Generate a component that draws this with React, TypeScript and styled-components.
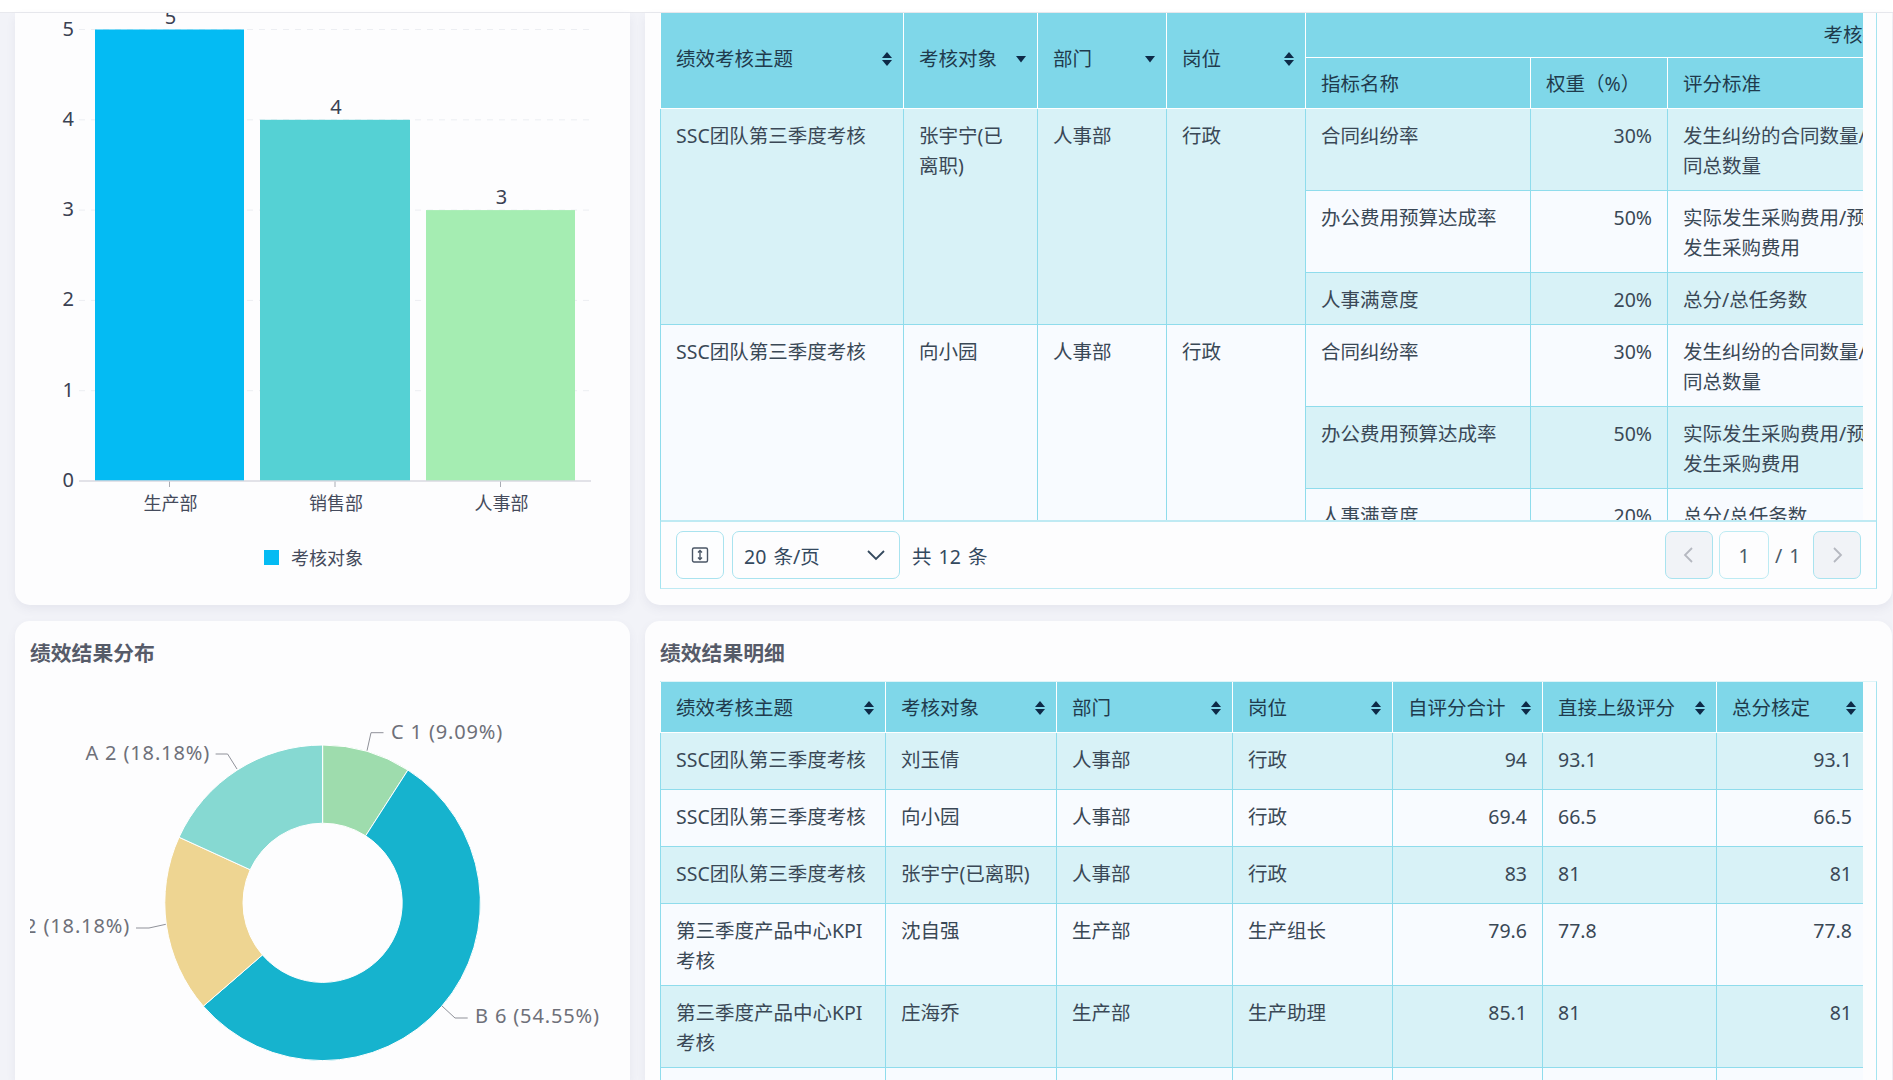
import React from "react";
import styled, { createGlobalStyle } from "styled-components";

const FONT = `"Noto Sans", "Noto Sans CJK SC", sans-serif`;

const Global = createGlobalStyle`
  html, body { margin: 0; padding: 0; height: 1080px; overflow: hidden; background: #f2f3f8; }
  body { font-family: ${FONT}; font-size: 19.5px; color: #33424f; }
  * { box-sizing: border-box; }
`;

const Page = styled.div`
  width: 1893px;
  height: 1080px;
  overflow: hidden;
  display: flex;
  flex-direction: column;
`;
const TopBar = styled.div`
  flex: none;
  height: 13px;
  background: #fff;
  border-bottom: 1px solid #e8e9ee;
`;
const Grid = styled.div`
  flex: 1;
  min-height: 0;
  display: grid;
  grid-template-columns: 615px 1247px;
  grid-template-rows: 592px 1fr;
  column-gap: 15px;
  row-gap: 16px;
  padding-left: 15px;
`;
const Card = styled.section<{ $cut?: boolean }>`
  background: #fdfdfe;
  border-radius: ${(p) => (p.$cut ? "0 0 15px 15px" : "15px 15px 0 0")};
  box-shadow: 0 4px 10px rgba(90, 95, 130, 0.08);
  padding: 0 15px ${(p) => (p.$cut ? "16px" : "0")};
  min-height: 0;
  overflow: hidden;
`;
const Title = styled.h2`
  margin: 0;
  height: 60px;
  padding-top: 15px;
  font-size: 20.8px;
  line-height: 34px;
  font-weight: 700;
  color: #565b69;
`;
const ChartSvg = styled.svg`
  display: block;
`;
const AxisText = styled.text<{ $num?: boolean }>`
  font-family: ${FONT};
  font-size: ${(p) => (p.$num ? "20px" : "18px")};
  fill: ${(p) => (p.$num ? "#3a4152" : "#454b5c")};
`;
const PieText = styled.text`
  font-family: ${FONT};
  font-size: 20px;
  letter-spacing: 0.85px;
  fill: #6e7079;
`;
const TableFrame = styled.div<{ $open?: boolean }>`
  display: flex;
  flex-direction: column;
  height: ${(p) => (p.$open ? "420px" : "576px")};
  border-left: 1px solid #a5e4f0;
  border-right: 1px solid #a5e4f0;
  border-top: ${(p) => (p.$open ? "1px solid #dff4f8" : "none")};
  border-bottom: ${(p) => (p.$open ? "none" : "1px solid #bfeaf3")};
`;
const Scroller = styled.div`
  flex: 1;
  min-height: 0;
  width: 1203px;
  margin-left: -1px;
  overflow: hidden;
`;
const Table = styled.table<{ $w: number }>`
  width: ${(p) => p.$w}px;
  table-layout: fixed;
  border-collapse: collapse;
  line-height: 30px;
  font-size: 19.5px;
  tbody tr:nth-child(odd) td { background: #d8f2f7; }
  tbody tr:nth-child(even) td { background: #f8fbff; }
`;
const Th = styled.th<{ $center?: boolean; $pt?: number; $pb?: number }>`
  background: #7fd7e9;
  border: 1px solid #fff;
  border-top: none;
  font-weight: 400;
  color: #1f3b4d;
  padding: ${(p) => p.$pt ?? 0}px 10px ${(p) => p.$pb ?? 0}px 15px;
  text-align: ${(p) => (p.$center ? "center" : "left")};
  white-space: nowrap;
`;
const HeadRow = styled.tr<{ $h: number }>`
  height: ${(p) => p.$h}px;
`;
const HeadInner = styled.div`
  display: flex;
  align-items: center;
  justify-content: space-between;
`;
const Td = styled.td<{ $right?: boolean }>`
  border: 1px solid #8fdcec;
  padding: 12px 15px 9px;
  vertical-align: top;
  color: #3a4856;
  text-align: ${(p) => (p.$right ? "right" : "left")};
  word-break: break-all;
`;
const BodyRow = styled.tr<{ $h?: number }>`
  height: ${(p) => (p.$h ? `${p.$h}px` : "auto")};
`;
const Pager = styled.div`
  flex: none;
  height: 68px;
  border-top: 2px solid #bfeaf3;
  display: flex;
  align-items: center;
  padding: 0 15px;
  color: #34495e;
  word-spacing: 2px;
`;
const PagerButton = styled.div<{ $off?: boolean }>`
  width: 48px;
  height: 48px;
  border: 1px solid #a9e3ef;
  border-radius: 7px;
  background: ${(p) => (p.$off ? "#f1f3f7" : "#fdfeff")};
  display: flex;
  align-items: center;
  justify-content: center;
`;
const Select = styled.div`
  width: 168px;
  height: 48px;
  margin-left: 8px;
  border: 1px solid #a9e3ef;
  border-radius: 7px;
  display: flex;
  align-items: center;
  justify-content: space-between;
  padding: 0 14px 0 11px;
`;
const Total = styled.span`
  margin-left: 12px;
  flex: 1;
`;
const PageInput = styled.div`
  width: 50px;
  height: 48px;
  margin-left: 6px;
  border: 1px solid #bdebf3;
  border-radius: 7px;
  display: flex;
  align-items: center;
  justify-content: center;
  color: #4a5a6a;
`;
const PageOf = styled.span`
  width: 44px;
  padding-left: 6px;
  color: #4a5a6a;
`;

const Sort = ({ mode = "both" }: { mode?: "both" | "down" }) => (
  <svg width="12" height="16" viewBox="0 0 12 16" aria-hidden="true">
    {mode === "both" ? (
      <>
        <path d="M6 1 L11 7 H1 Z" fill="#0e2a47" />
        <path d="M6 15 L11 9 H1 Z" fill="#0e2a47" />
      </>
    ) : (
      <path d="M6 11.5 L11 5 H1 Z" fill="#0e2a47" />
    )}
  </svg>
);

const HeadCell = ({
  label,
  mode,
  rows,
  pt,
  pb,
}: {
  label: string;
  mode?: "both" | "down";
  rows?: number;
  pt?: number;
  pb?: number;
}) => (
  <Th rowSpan={rows} $pt={pt} $pb={pb}>
    <HeadInner>
      {label}
      <Sort mode={mode} />
    </HeadInner>
  </Th>
);

const MetricCells = ({ name, weight, rule }: { name: string; weight: string; rule: string }) => (
  <>
    <Td>{name}</Td>
    <Td $right>{weight}</Td>
    <Td>{rule}</Td>
    <Td />
  </>
);

const CONTRACT = ["合同纠纷率", "30%", "发生纠纷的合同数量/合同总数量"];
const BUDGET = ["办公费用预算达成率", "50%", "实际发生采购费用/预算发生采购费用"];
const SATISFY = ["人事满意度", "20%", "总分/总任务数"];

const PERSONS = [{ name: "张宇宁(已离职)" }, { name: "向小园" }];

const TopTable = () => (
  <Table $w={1754}>
    <colgroup>
      {[243, 134, 129, 139, 225, 137, 240, 507].map((w, i) => (
        <col key={i} width={w} />
      ))}
    </colgroup>
    <thead>
      <HeadRow $h={44}>
        <HeadCell label="绩效考核主题" rows={2} pb={2} />
        <HeadCell label="考核对象" mode="down" rows={2} pb={2} />
        <HeadCell label="部门" mode="down" rows={2} pb={2} />
        <HeadCell label="岗位" rows={2} pb={2} />
        <Th colSpan={4} $center>考核指标</Th>
      </HeadRow>
      <HeadRow $h={51}>
        <Th $pt={2}>指标名称</Th>
        <Th $pt={2}>权重（%）</Th>
        <Th $pt={2}>评分标准</Th>
        <Th />
      </HeadRow>
    </thead>
    <tbody>
      {PERSONS.map((p) => (
        <React.Fragment key={p.name}>
          <BodyRow>
            <Td rowSpan={3}>SSC团队第三季度考核</Td>
            <Td rowSpan={3}>{p.name}</Td>
            <Td rowSpan={3}>人事部</Td>
            <Td rowSpan={3}>行政</Td>
            <MetricCells name={CONTRACT[0]} weight={CONTRACT[1]} rule={CONTRACT[2]} />
          </BodyRow>
          <BodyRow>
            <MetricCells name={BUDGET[0]} weight={BUDGET[1]} rule={BUDGET[2]} />
          </BodyRow>
          <BodyRow>
            <MetricCells name={SATISFY[0]} weight={SATISFY[1]} rule={SATISFY[2]} />
          </BodyRow>
        </React.Fragment>
      ))}
    </tbody>
  </Table>
);

const RESULT_COLS = ["绩效考核主题", "考核对象", "部门", "岗位", "自评分合计", "直接上级评分", "总分核定"];
const KPI = "第三季度产品中心KPI考核";
const SSC = "SSC团队第三季度考核";
const RESULTS = [
  [SSC, "刘玉倩", "人事部", "行政", "94", "93.1", "93.1"],
  [SSC, "向小园", "人事部", "行政", "69.4", "66.5", "66.5"],
  [SSC, "张宇宁(已离职)", "人事部", "行政", "83", "81", "81"],
  [KPI, "沈自强", "生产部", "生产组长", "79.6", "77.8", "77.8"],
  [KPI, "庄海乔", "生产部", "生产助理", "85.1", "81", "81"],
  ["", "", "", "", "", "", ""],
];

const ResultTable = () => (
  <Table $w={1207}>
    <colgroup>
      {[225, 171, 176, 160, 150, 174, 151].map((w, i) => (
        <col key={i} width={w} />
      ))}
    </colgroup>
    <thead>
      <HeadRow $h={50}>
        {RESULT_COLS.map((c) => (
          <HeadCell key={c} label={c} pt={2} />
        ))}
      </HeadRow>
    </thead>
    <tbody>
      {RESULTS.map((r, i) => (
        <BodyRow key={i} $h={57}>
          {r.map((v, j) => (
            <Td key={j} $right={j === 4 || j === 6}>{v}</Td>
          ))}
        </BodyRow>
      ))}
    </tbody>
  </Table>
);

const BARS = [
  { x: 65, w: 149, v: 5, label: "生产部", color: "#04bbf3" },
  { x: 230, w: 150, v: 4, label: "销售部", color: "#55d1d4" },
  { x: 396, w: 149, v: 3, label: "人事部", color: "#a5edb2" },
];
const BAR_BASE = 468;
const BAR_STEP = 90.3;

const BarChart = () => (
  <ChartSvg width={585} height={578} viewBox="0 0 585 578">
    {[1, 2, 3, 4, 5].map((n) => (
      <line
        key={n}
        x1={49}
        x2={561}
        y1={BAR_BASE - n * BAR_STEP}
        y2={BAR_BASE - n * BAR_STEP}
        stroke="#eceef2"
        strokeDasharray="6 6"
      />
    ))}
    {[0, 1, 2, 3, 4, 5].map((n) => (
      <AxisText key={n} $num x={44} y={BAR_BASE - n * BAR_STEP + 6} textAnchor="end">
        {n}
      </AxisText>
    ))}
    {BARS.map((b) => (
      <g key={b.label}>
        <rect x={b.x} y={BAR_BASE - b.v * BAR_STEP} width={b.w} height={b.v * BAR_STEP} fill={b.color} />
        <AxisText $num x={b.x + b.w / 2 + 1} y={BAR_BASE - b.v * BAR_STEP - 6} textAnchor="middle">
          {b.v}
        </AxisText>
        <line x1={b.x + b.w / 2} x2={b.x + b.w / 2} y1={BAR_BASE} y2={BAR_BASE + 6} stroke="#a9acb4" />
        <AxisText x={b.x + b.w / 2 + 1} y={BAR_BASE + 29} textAnchor="middle">
          {b.label}
        </AxisText>
      </g>
    ))}
    <line x1={49} x2={561} y1={BAR_BASE} y2={BAR_BASE} stroke="#d8d9e0" strokeWidth={1.5} />
    <rect x={234} y={537} width={15} height={15} fill="#04bbf3" />
    <AxisText x={261} y={552}>考核对象</AxisText>
  </ChartSvg>
);

const CX = 292.6;
const CY = 221.8;
const R1 = 157.8;
const R0 = 79.6;
const slice = (a0: number, a1: number) => {
  const pt = (r: number, a: number) => {
    const t = (a * Math.PI) / 180;
    return `${(CX + r * Math.sin(t)).toFixed(2)} ${(CY - r * Math.cos(t)).toFixed(2)}`;
  };
  const large = a1 - a0 > 180 ? 1 : 0;
  return `M${pt(R0, a0)} L${pt(R1, a0)} A${R1} ${R1} 0 ${large} 1 ${pt(R1, a1)} L${pt(R0, a1)} A${R0} ${R0} 0 ${large} 0 ${pt(R0, a0)} Z`;
};
const SLICES = [
  { a0: 0, a1: 32.73, color: "#9edcad" },
  { a0: 32.73, a1: 229.09, color: "#16b3ce" },
  { a0: 229.09, a1: 294.55, color: "#eed592" },
  { a0: 294.55, a1: 360, color: "#86d9d2" },
];
const LEADERS = [
  "M337 69.7 L341 51.7 H353.5",
  "M207 88 L197.6 73 H185.6",
  "M135.8 243.3 L119 247 H106",
  "M412 325 L425 337 H437.7",
];

const PieChart = () => (
  <ChartSvg width={585} height={400} viewBox="0 0 585 400">
    {SLICES.map((s) => (
      <path key={s.color} d={slice(s.a0, s.a1)} fill={s.color} stroke="#fff" strokeWidth={1} />
    ))}
    {LEADERS.map((d) => (
      <path key={d} d={d} fill="none" stroke="#8f9199" strokeWidth={1} />
    ))}
    <PieText x={361} y={58}>C 1 (9.09%)</PieText>
    <PieText x={180} y={79} textAnchor="end">A 2 (18.18%)</PieText>
    <PieText x={100} y={252} textAnchor="end">D 2 (18.18%)</PieText>
    <PieText x={445} y={342}>B 6 (54.55%)</PieText>
  </ChartSvg>
);

const SizeIcon = () => (
  <svg width="18" height="18" viewBox="0 0 18 18" fill="none" stroke="#4a5666" strokeWidth="1.4" aria-hidden="true">
    <rect x="1.5" y="2" width="15" height="14" rx="1.5" />
    <path d="M9 4.5 V13.5 M7 6.5 L9 4.5 L11 6.5 M7 11.5 L9 13.5 L11 11.5" />
  </svg>
);
const Chevron = ({ dir, color, size = 18 }: { dir: "left" | "right" | "down"; color: string; size?: number }) => {
  const d = dir === "down" ? "M1 5 L9 13 L17 5" : dir === "left" ? "M12 2 L5 9 L12 16" : "M6 2 L13 9 L6 16";
  return (
    <svg width={size} height={size} viewBox="0 0 18 18" fill="none" stroke={color} strokeWidth="1.8" aria-hidden="true">
      <path d={d} />
    </svg>
  );
};

export default function App() {
  return (
    <Page>
      <Global />
      <TopBar />
      <Grid>
        <Card $cut>
          <BarChart />
        </Card>
        <Card $cut>
          <TableFrame>
            <Scroller>
              <TopTable />
            </Scroller>
            <Pager>
              <PagerButton>
                <SizeIcon />
              </PagerButton>
              <Select>
                20 条/页
                <Chevron dir="down" color="#34495e" />
              </Select>
              <Total>共 12 条</Total>
              <PagerButton $off>
                <Chevron dir="left" color="#b5b8c0" />
              </PagerButton>
              <PageInput>1</PageInput>
              <PageOf>/ 1</PageOf>
              <PagerButton $off>
                <Chevron dir="right" color="#b5b8c0" />
              </PagerButton>
            </Pager>
          </TableFrame>
        </Card>
        <Card>
          <Title>绩效结果分布</Title>
          <PieChart />
        </Card>
        <Card>
          <Title>绩效结果明细</Title>
          <TableFrame $open>
            <Scroller>
              <ResultTable />
            </Scroller>
          </TableFrame>
        </Card>
      </Grid>
    </Page>
  );
}
